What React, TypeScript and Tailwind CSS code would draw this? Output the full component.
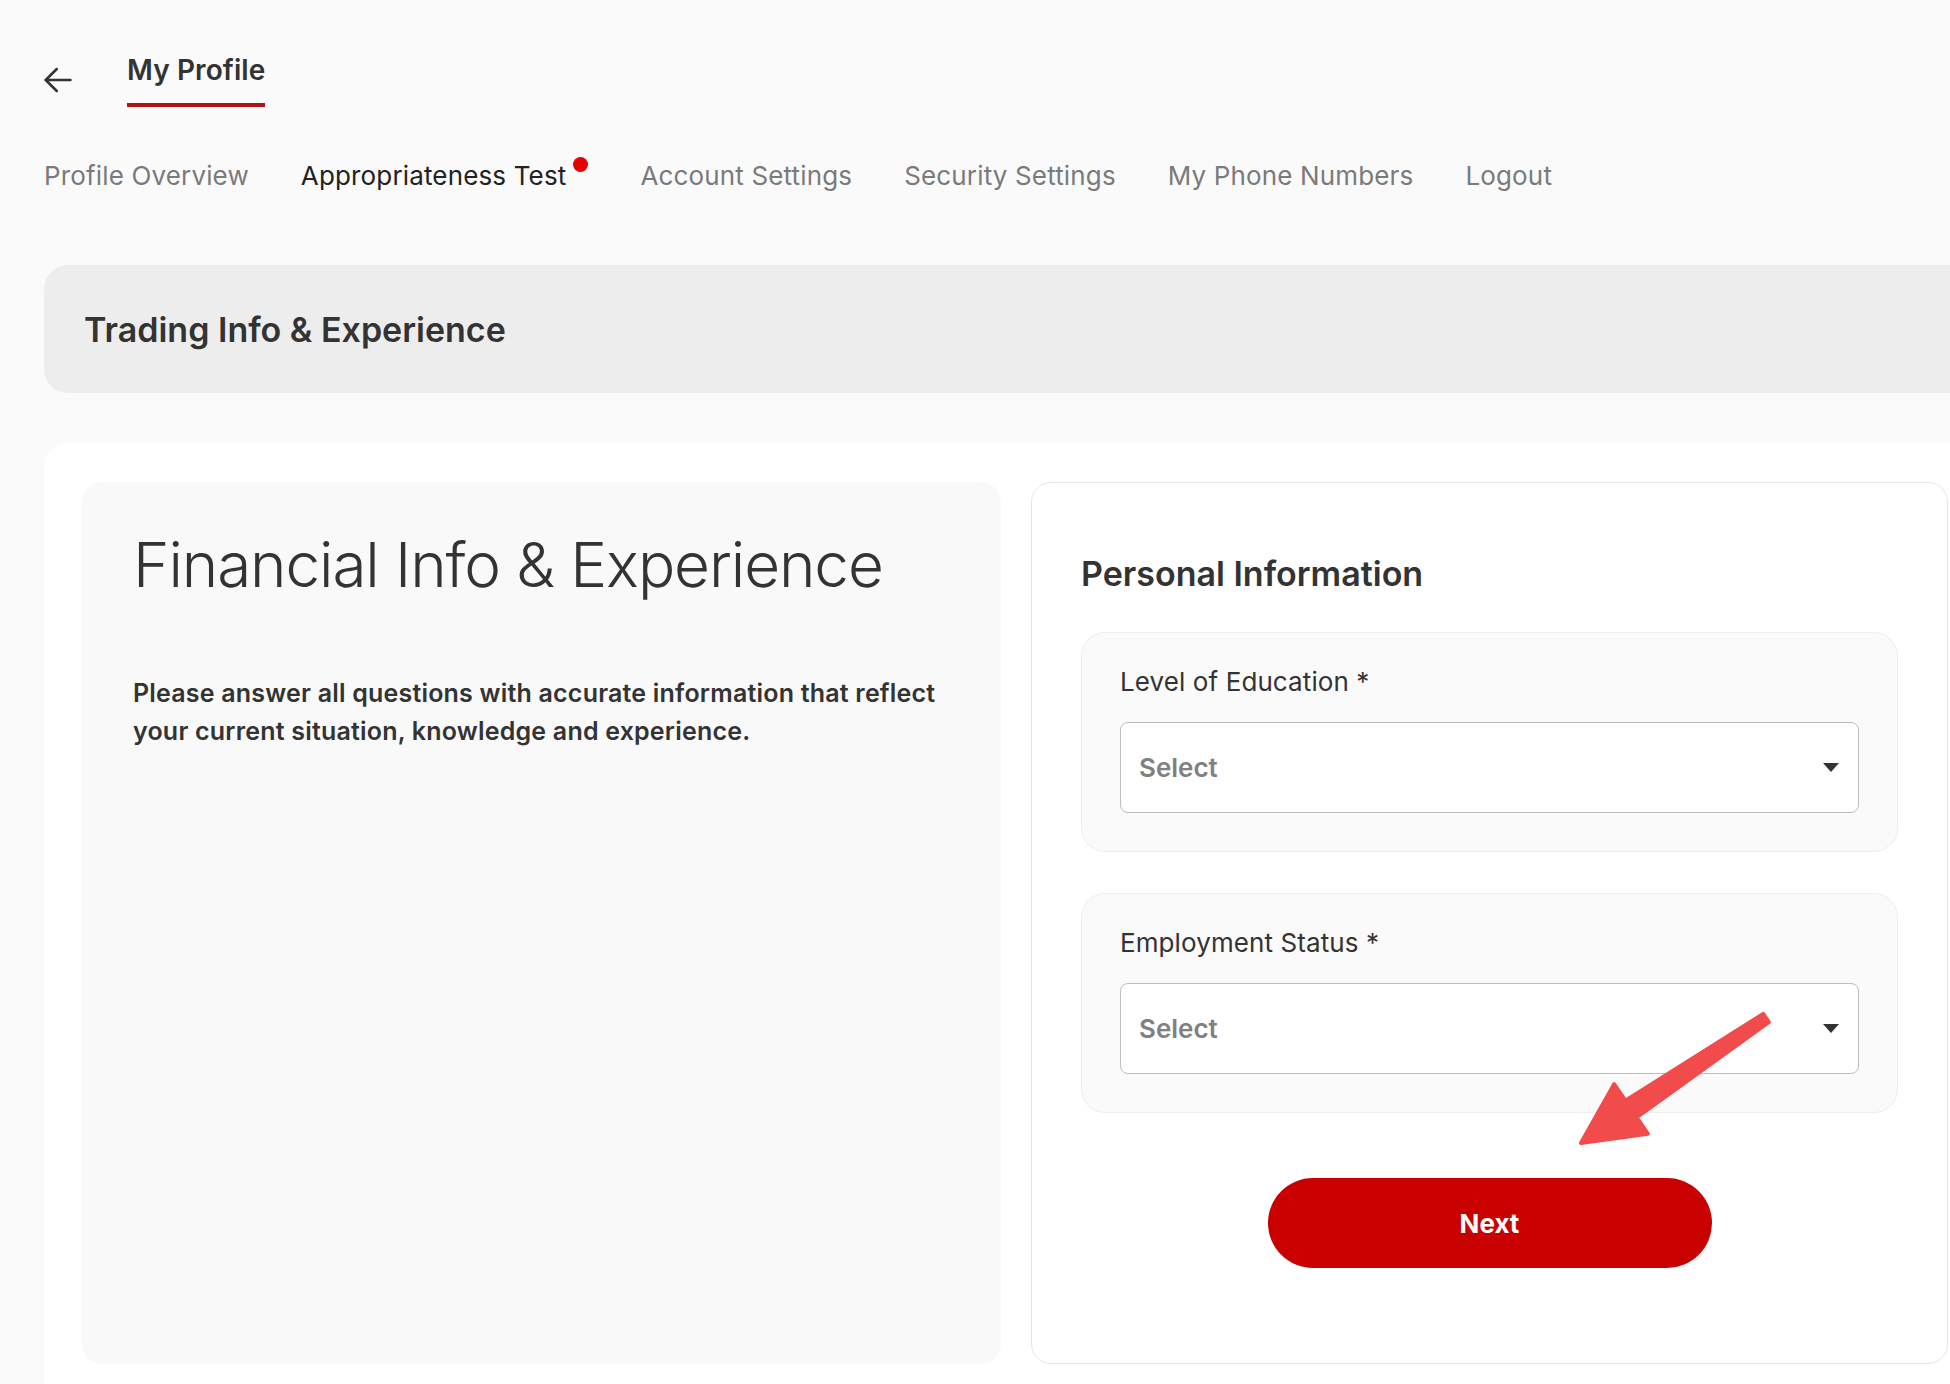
export default function App() {
  const navItems = ["Account Settings", "Security Settings", "My Phone Numbers", "Logout"];
  return (
    <div className="relative h-[1384px] w-full overflow-hidden bg-[#fafafa] font-['Inter',sans-serif] text-[#333]">
      <div className="pl-[44px]">
        <div className="flex items-center pt-[52px]">
          <button className="flex h-[26px] w-[28px] items-center justify-center text-[#333]">
            <svg width="28" height="26" viewBox="0 0 28 26" fill="none" stroke="currentColor" strokeWidth="2.5" strokeLinecap="round" strokeLinejoin="round">
              <path d="M26.5 13H1.75" />
              <path d="M12.75 2L1.75 13L12.75 24" />
            </svg>
          </button>
          <div className="ml-[55px] flex flex-col">
            <span className="text-[28px] font-semibold leading-[36px] tracking-[0.1px] text-[#333]">My Profile</span>
            <span className="mt-[15px] h-[4px] w-full bg-[#b0141a]" />
          </div>
        </div>

        <nav className="mt-[53px] flex items-start gap-[52px] text-[26px] leading-[32px] tracking-[0.15px] text-[#7a7a7a]">
          <span>Profile Overview</span>
          <span className="flex items-start text-[#222]">
            Appropriateness Test
            <span className="ml-[7px] mt-[-3px] h-[15px] w-[15px] rounded-full bg-[#e60000]" />
          </span>
          {navItems.map((n) => (
            <span key={n}>{n}</span>
          ))}
        </nav>

        <div className="-mr-[80px] mt-[73px] flex h-[128px] items-center rounded-[24px] bg-[#ededed] pl-[40px]">
          <h1 className="text-[34px] font-semibold text-[#333]">Trading Info &amp; Experience</h1>
        </div>

        <div className="mt-[50px] w-[1942px] rounded-[24px] bg-white px-[38px] pb-[38px] pt-[39px]">
          <div className="grid grid-cols-[919px_917px] gap-[30px]">
            <div className="rounded-[20px] bg-[#f9f9f9] px-[51px] pt-[47px]">
              <h2 className="text-[62px] font-light leading-[72px] tracking-[-1.1px] text-[#333]">Financial Info &amp; Experience</h2>
              <p className="mt-[73px] text-[25px] font-semibold leading-[38px] tracking-[0.2px] text-[#333]">
                Please answer all questions with accurate information that reflect your current situation, knowledge and experience.
              </p>
            </div>

            <div className="rounded-[20px] border border-[#e6e6e6] bg-white px-[49px] pb-[95px] pt-[71px]">
              <h3 className="text-[34px] font-semibold leading-[40px] text-[#333]">Personal Information</h3>
              <div className="mt-[38px] flex flex-col gap-[41px]">
                {["Level of Education *", "Employment Status *"].map((label) => (
                  <div key={label} className="rounded-[24px] border border-[#eeeeee] bg-[#fafafa] px-[38px] pb-[38px] pt-[34px]">
                    <div className="mb-[25px] text-[26px] leading-[30px] tracking-[0.1px] text-[#333]">{label}</div>
                    <div className="flex h-[91px] items-center justify-between rounded-[8px] border border-[#bdbdbd] bg-white pl-[18px] pr-[19px]">
                      <span className="text-[26px] font-semibold text-[#808080]">Select</span>
                      <svg width="16" height="9" viewBox="0 0 16 9">
                        <polygon points="0,0 16,0 8,9" fill="#333" />
                      </svg>
                    </div>
                  </div>
                ))}
              </div>
              <button className="mx-auto mt-[65px] flex h-[90px] w-[444px] items-center justify-center rounded-full bg-[#c80000] text-[26px] font-bold text-white">
                Next
              </button>
            </div>
          </div>
        </div>
      </div>

      <svg className="pointer-events-none absolute left-0 top-0" width="1950" height="1384" viewBox="0 0 1950 1384">
        <polygon
          points="1763.2,1013.9 1625.4,1100.7 1614.1,1084.2 1581,1143 1647.9,1133.8 1636.6,1117.3 1768.8,1022.1"
          fill="#f24b4b"
          stroke="#f24b4b"
          strokeWidth="4"
          strokeLinejoin="round"
        />
      </svg>
    </div>
  );
}
